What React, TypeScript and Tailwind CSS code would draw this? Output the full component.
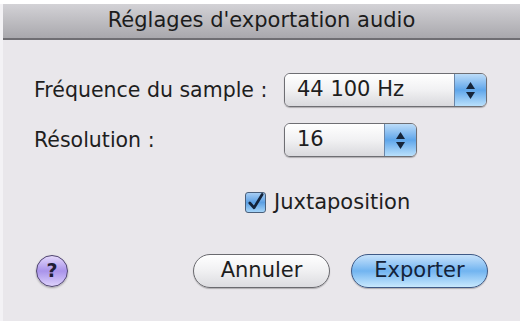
import React from 'react';

const font = { fontFamily: '"DejaVu Sans", "Open Sans", sans-serif' };

const Stepper: React.FC = () => (
  <div className="w-[32px] h-full flex flex-col items-center justify-center gap-[3px] border-l border-[#6a86a8] bg-gradient-to-b from-[#bcdcf8] via-[#5fa6ea] to-[#b9e0fb]">
    <svg width="9" height="7" viewBox="0 0 9 7"><path d="M4.5 0 L9 7 L0 7 Z" fill="#16253a" /></svg>
    <svg width="9" height="7" viewBox="0 0 9 7"><path d="M0 0 L9 0 L4.5 7 Z" fill="#16253a" /></svg>
  </div>
);

const Popup: React.FC<{ value: string; width: string }> = ({ value, width }) => (
  <div className={`${width} h-[34px] flex items-stretch rounded-[6px] border border-[#6e6e73] overflow-hidden shadow-[0_1px_1px_rgba(0,0,0,0.25)]`}>
    <div className="flex-1 flex items-center pl-[12px] text-[21px] text-[#1e1e1e] bg-gradient-to-b from-[#ffffff] via-[#f1f1f3] to-[#d9d9dd]">
      {value}
    </div>
    <Stepper />
  </div>
);

export default function App() {
  return (
    <div className="w-[520px] h-[321px] bg-white pt-[4px] overflow-hidden" style={font}>
      <div className="h-[317px] flex flex-col border-l-[3px] border-[#f3f2f5]">
        {/* title bar */}
        <div className="h-[36px] flex items-center justify-center text-[21px] text-[#1c1c1c] bg-gradient-to-b from-[#d3d2d6] to-[#a9a8ad] border-b-[2px] border-[#6f6e73]">
          Réglages d'exportation audio
        </div>

        {/* body */}
        <div className="flex-1 bg-[#e9e7eb] flex flex-col">
          <div className="grid grid-cols-[250px_auto] gap-y-[16px] items-center pl-[31px] pt-[33px] text-[20.5px] text-[#1e1e1e]">
            <span className="whitespace-nowrap">Fréquence du sample :</span>
            <Popup value="44 100 Hz" width="w-[203px]" />
            <span>Résolution :</span>
            <Popup value="16" width="w-[133px]" />
          </div>

          <div className="flex items-center pl-[242px] mt-[30px] gap-[8px]">
            <div className="w-[21px] h-[21px] rounded-[3px] border border-[#4a5f7a] bg-gradient-to-b from-[#a6cdf3] via-[#5b9fe3] to-[#a4d4f8] flex items-center justify-center">
              <svg width="20" height="20" viewBox="0 0 20 20">
                <path d="M4 10 L8.5 15 L17 1" stroke="#14233a" strokeWidth="2.8" fill="none" strokeLinecap="round" strokeLinejoin="round" />
              </svg>
            </div>
            <span className="text-[21px] text-[#1e1e1e]">Juxtaposition</span>
          </div>

          <div className="flex items-center mt-[35px] pl-[33px]">
            <div className="w-[32px] h-[32px] rounded-full border border-[#4f4470] bg-gradient-to-b from-[#e4d8fb] via-[#a993ea] to-[#ddd1fb] flex items-center justify-center text-[19px] font-bold text-[#1f1c36] shadow-[0_1px_2px_rgba(0,0,0,0.3)]">
              ?
            </div>
            <button className="ml-[125px] w-[137px] h-[34px] rounded-full border-[1.5px] border-[#6a6a6f] bg-gradient-to-b from-[#ffffff] via-[#f0f0f2] to-[#dcdce0] text-[21px] text-[#1e1e1e] shadow-[0_1px_1px_rgba(0,0,0,0.25)]">
              Annuler
            </button>
            <button className="ml-[21px] w-[137px] h-[34px] rounded-full border-[1.5px] border-[#3f5a86] bg-gradient-to-b from-[#c6e2fb] via-[#71b4f0] to-[#c8e9fd] text-[21px] text-[#14233a] shadow-[0_1px_1px_rgba(0,0,0,0.25)]">
              Exporter
            </button>
          </div>
        </div>
      </div>
    </div>
  );
}
